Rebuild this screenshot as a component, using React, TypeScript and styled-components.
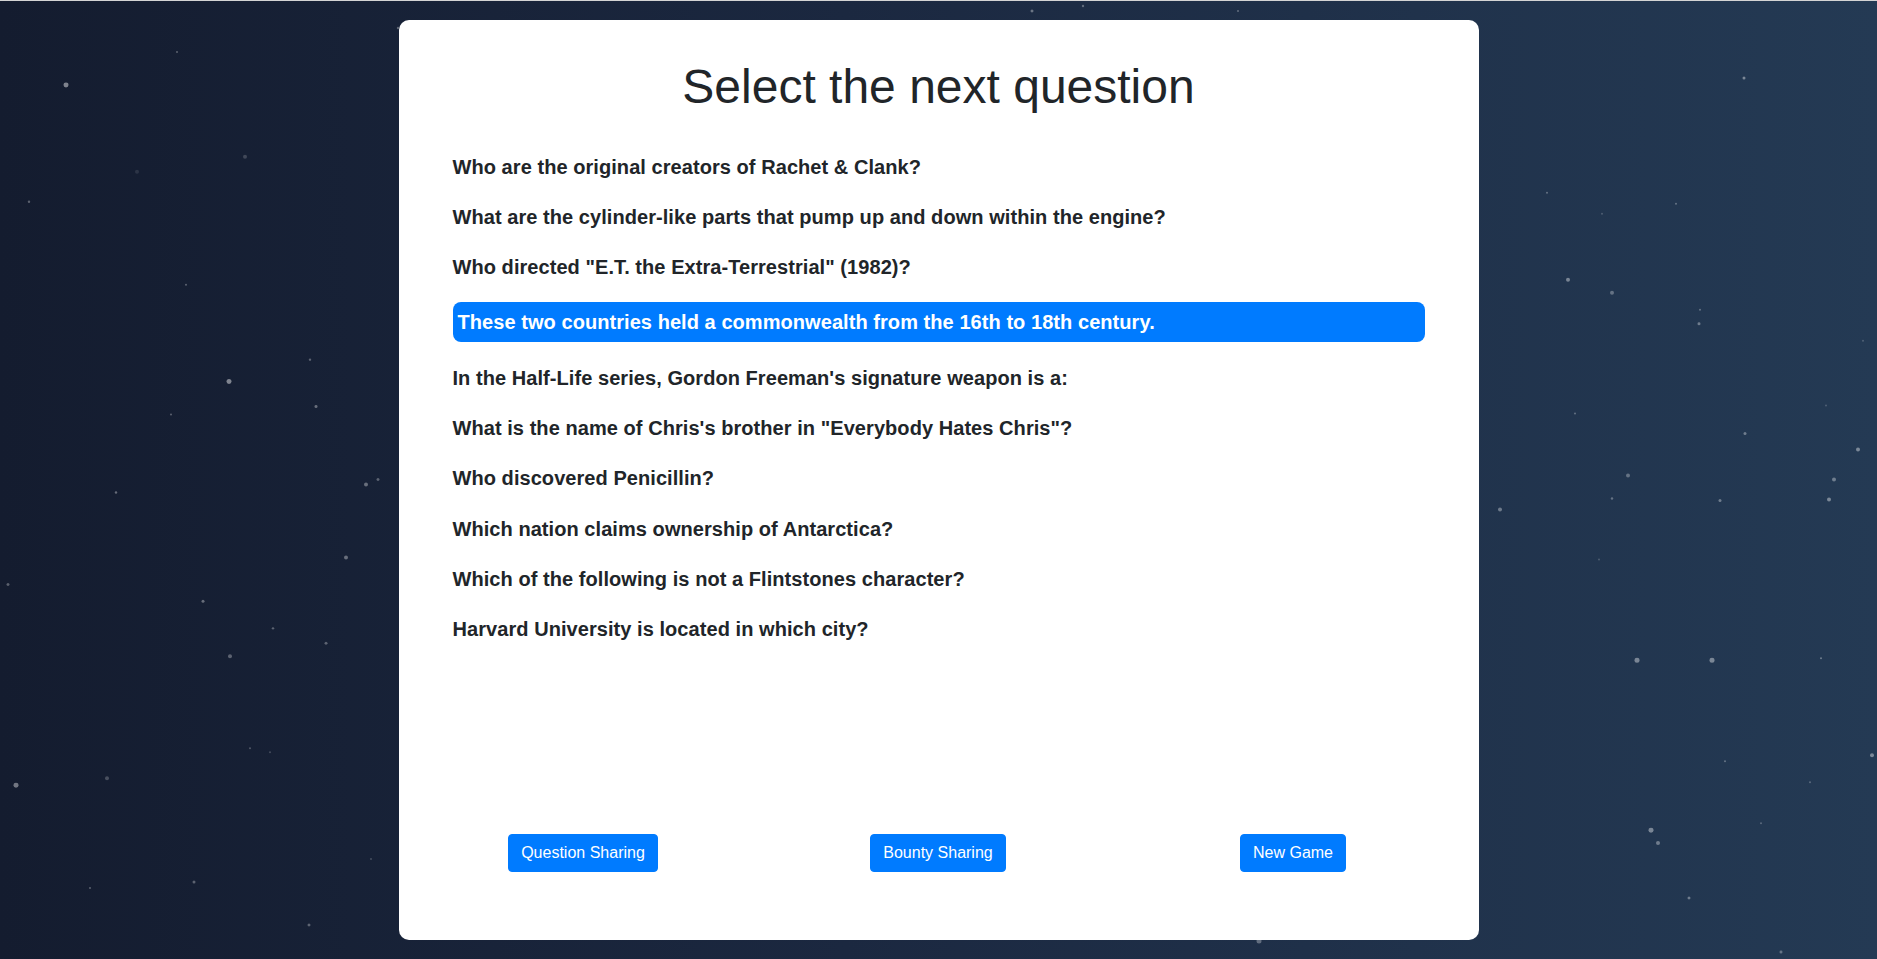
import React from "react";
import styled, { createGlobalStyle } from "styled-components";

const GlobalStyle = createGlobalStyle`
  html, body {
    margin: 0;
    padding: 0;
    height: 100%;
  }
  body {
    font-family: "Liberation Sans", Arial, sans-serif;
    overflow: hidden;
  }
  * { box-sizing: border-box; }
`;

const Page = styled.div`
  position: relative;
  width: 100%;
  height: 959px;
  border-top: 1px solid #d4d4d4;
  background: linear-gradient(90deg, #141c2f 0%, #1b2840 45%, #243a54 100%);
  display: flex;
  justify-content: center;
  padding-top: 19px;
  overflow: hidden;
`;

const StarField = styled.svg`
  position: absolute;
  inset: 0;
  width: 100%;
  height: 100%;
  pointer-events: none;
`;

const Card = styled.div`
  position: relative;
  width: 1080px;
  height: 920px;
  background: #ffffff;
  border-radius: 10px;
  display: flex;
  flex-direction: column;
  padding: 38px 0 68px;
`;

const Title = styled.h1`
  margin: 0 0 36px;
  text-align: center;
  font-family: "Liberation Sans", Arial, sans-serif;
  font-weight: 400;
  font-size: 48px;
  line-height: 1.2;
  color: #212529;
`;

const QuestionList = styled.div`
  flex: 1;
  display: flex;
  flex-direction: column;
  gap: 20.3px;
  padding: 0 54px 0 54px;
`;

const Question = styled.div<{ $active?: boolean }>`
  font-family: "Liberation Sans", Arial, sans-serif;
  font-weight: 700;
  font-size: 20px;
  letter-spacing: 0.06px;
  line-height: 30px;
  color: ${(p) => (p.$active ? "#ffffff" : "#212529")};
  background: ${(p) => (p.$active ? "#007bff" : "transparent")};
  border-radius: ${(p) => (p.$active ? "8px" : "0")};
  padding: ${(p) => (p.$active ? "5px 5px" : "0")};
  cursor: pointer;
`;

const ButtonRow = styled.div`
  display: grid;
  grid-template-columns: repeat(3, 1fr);
  justify-items: center;
  padding: 0 8px 0 7px;
`;

const Button = styled.button`
  font-family: "Liberation Sans", Arial, sans-serif;
  font-size: 16px;
  line-height: 24px;
  padding: 6px 12px;
  border: 1px solid #007bff;
  border-radius: 4px;
  background: #007bff;
  color: #ffffff;
  cursor: pointer;
`;

const questions = [
  "Who are the original creators of Rachet & Clank?",
  "What are the cylinder-like parts that pump up and down within the engine?",
  'Who directed "E.T. the Extra-Terrestrial" (1982)?',
  "These two countries held a commonwealth from the 16th to 18th century.",
  "In the Half-Life series, Gordon Freeman's signature weapon is a:",
  'What is the name of Chris\'s brother in "Everybody Hates Chris"?',
  "Who discovered Penicillin?",
  "Which nation claims ownership of Antarctica?",
  "Which of the following is not a Flintstones character?",
  "Harvard University is located in which city?",
];

const stars: [number, number, number, number][] = [
  [66, 84, 2.5, 0.45], [245, 156, 2, 0.18], [137, 171, 2, 0.1], [29, 201, 1.2, 0.3],
  [229, 381, 2.5, 0.45], [316, 406, 1.5, 0.35], [366, 484, 2, 0.35], [378, 479, 1.5, 0.3],
  [116, 492, 1.2, 0.35], [171, 414, 1, 0.3], [346, 557, 2, 0.35], [203, 601, 1.5, 0.35],
  [8, 584, 1.5, 0.3], [230, 656, 2, 0.3], [16, 785, 2.5, 0.4], [107, 778, 2, 0.22],
  [273, 628, 1.2, 0.3], [326, 643, 1.5, 0.3], [309, 925, 1.5, 0.3], [270, 752, 1, 0.2],
  [194, 882, 1.5, 0.3], [90, 888, 1, 0.3], [371, 859, 1, 0.2], [177, 51, 1, 0.3],
  [186, 284, 1, 0.3], [310, 359, 1.2, 0.3], [250, 748, 1, 0.25], [398, 27, 1.2, 0.3],
  [1032, 10, 1.5, 0.35], [1083, 5, 1.2, 0.3], [1238, 10, 1, 0.3],
  [1744, 77, 1.5, 0.4], [1547, 192, 1, 0.3], [1568, 279, 2, 0.4], [1612, 292, 2, 0.3],
  [1699, 323, 1.5, 0.35], [1700, 309, 1, 0.3], [1858, 449, 2, 0.4], [1628, 475, 2, 0.3],
  [1720, 500, 1.5, 0.35], [1500, 509, 2, 0.35], [1834, 479, 2, 0.35], [1829, 499, 2, 0.4],
  [1637, 660, 2.5, 0.4], [1712, 660, 2.5, 0.4], [1821, 658, 1, 0.35], [1651, 830, 2.5, 0.4],
  [1658, 843, 2, 0.35], [1872, 755, 2, 0.4], [1689, 898, 1.5, 0.35], [1781, 952, 1.5, 0.3],
  [1725, 761, 1, 0.3], [1810, 782, 1, 0.25], [1259, 941, 2.5, 0.3], [1676, 203, 1, 0.3],
  [1575, 413, 1, 0.3], [1761, 823, 1, 0.25], [1599, 559, 1, 0.2], [1602, 213, 1, 0.2],
  [1826, 405, 1, 0.2], [1863, 340, 1, 0.2], [1745, 433, 1.5, 0.35], [1612, 498, 1.2, 0.3],
];

export default function App() {
  return (
    <>
      <GlobalStyle />
      <Page>
        <StarField viewBox="0 0 1877 959" preserveAspectRatio="none">
          {stars.map(([x, y, r, o], i) => (
            <circle key={i} cx={x} cy={y} r={r} fill="#ffffff" fillOpacity={o} />
          ))}
        </StarField>
        <Card>
          <Title>Select the next question</Title>
          <QuestionList>
            {questions.map((q, i) => (
              <Question key={i} $active={i === 3}>
                {q}
              </Question>
            ))}
          </QuestionList>
          <ButtonRow>
            <Button>Question Sharing</Button>
            <Button>Bounty Sharing</Button>
            <Button>New Game</Button>
          </ButtonRow>
        </Card>
      </Page>
    </>
  );
}
